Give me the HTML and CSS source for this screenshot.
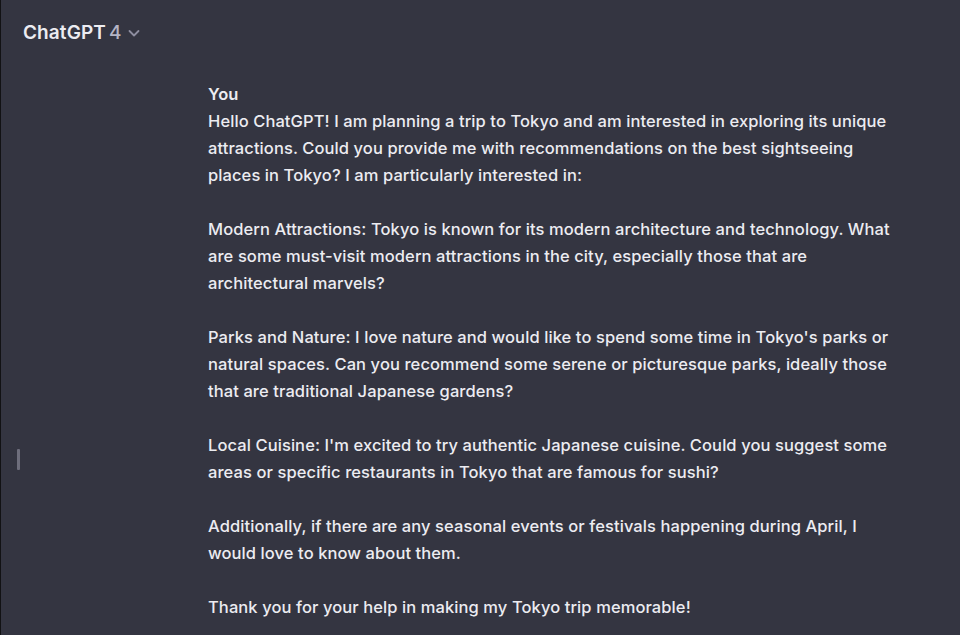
FILE: index.html
```html
<!DOCTYPE html>
<html>
<head>
<meta charset="utf-8">
<link rel="stylesheet" href="styles.css">
</head>
<body>
<div class="app">
  <div class="edge"></div>
  <main class="main">
    <header class="topbar">
      <span class="model">ChatGPT</span><span class="ver">4</span>
      <svg class="chev" width="12" height="12" viewBox="0 0 12 12"><path d="M1.5 4 L6 8.5 L10.5 4" fill="none" stroke="#8e8ea0" stroke-width="1.8" stroke-linecap="round" stroke-linejoin="round"/></svg>
    </header>
    <div class="handle"></div>
    <section class="message">
      <div class="author">You</div>
      <p>Hello ChatGPT! I am planning a trip to Tokyo and am interested in exploring its unique<br>attractions. Could you provide me with recommendations on the best sightseeing<br>places in Tokyo? I am particularly interested in:</p>
      <p>Modern Attractions: Tokyo is known for its modern architecture and technology. What<br>are some must-visit modern attractions in the city, especially those that are<br>architectural marvels?</p>
      <p>Parks and Nature: I love nature and would like to spend some time in Tokyo's parks or<br>natural spaces. Can you recommend some serene or picturesque parks, ideally those<br>that are traditional Japanese gardens?</p>
      <p>Local Cuisine: I'm excited to try authentic Japanese cuisine. Could you suggest some<br>areas or specific restaurants in Tokyo that are famous for sushi?</p>
      <p>Additionally, if there are any seasonal events or festivals happening during April, I<br>would love to know about them.</p>
      <p>Thank you for your help in making my Tokyo trip memorable!</p>
    </section>
  </main>
</div>
</body>
</html>
```
FILE: styles.css
```css
html, body {
  margin: 0;
  padding: 0;
  height: 100%;
  background: #343541;
  overflow: hidden;
}
.app {
  display: flex;
  height: 635px;
  font-family: Inter, "Noto Sans", sans-serif;
}
.edge {
  width: 1px;
  background: #121214;
  flex: none;
}
.main {
  flex: 1;
  position: relative;
}
.topbar {
  display: flex;
  align-items: center;
  height: 64px;
  padding-left: 22px;
}
.model {
  font-size: 19px;
  font-weight: 600;
  color: #ececf1;
  letter-spacing: 0.1px;
}
.ver {
  font-size: 19px;
  color: #b4b4c4;
  font-weight: 500;
  margin-left: 3px;
}
.chev {
  margin-left: 7px;
  margin-top: 2px;
}
.handle {
  position: absolute;
  left: 16px;
  top: 449px;
  width: 3px;
  height: 21px;
  background: #6e6e7c;
  border-radius: 1px;
}
.message {
  padding-left: 207px;
  padding-top: 17px;
  color: #ececf1;
  font-size: 16.5px;
  font-weight: 500;
  line-height: 27px;
  letter-spacing: 0.09px;
  white-space: nowrap;
}
.author {
  font-weight: 600;
}
.message p {
  margin: 0 0 27px 0;
}
```
